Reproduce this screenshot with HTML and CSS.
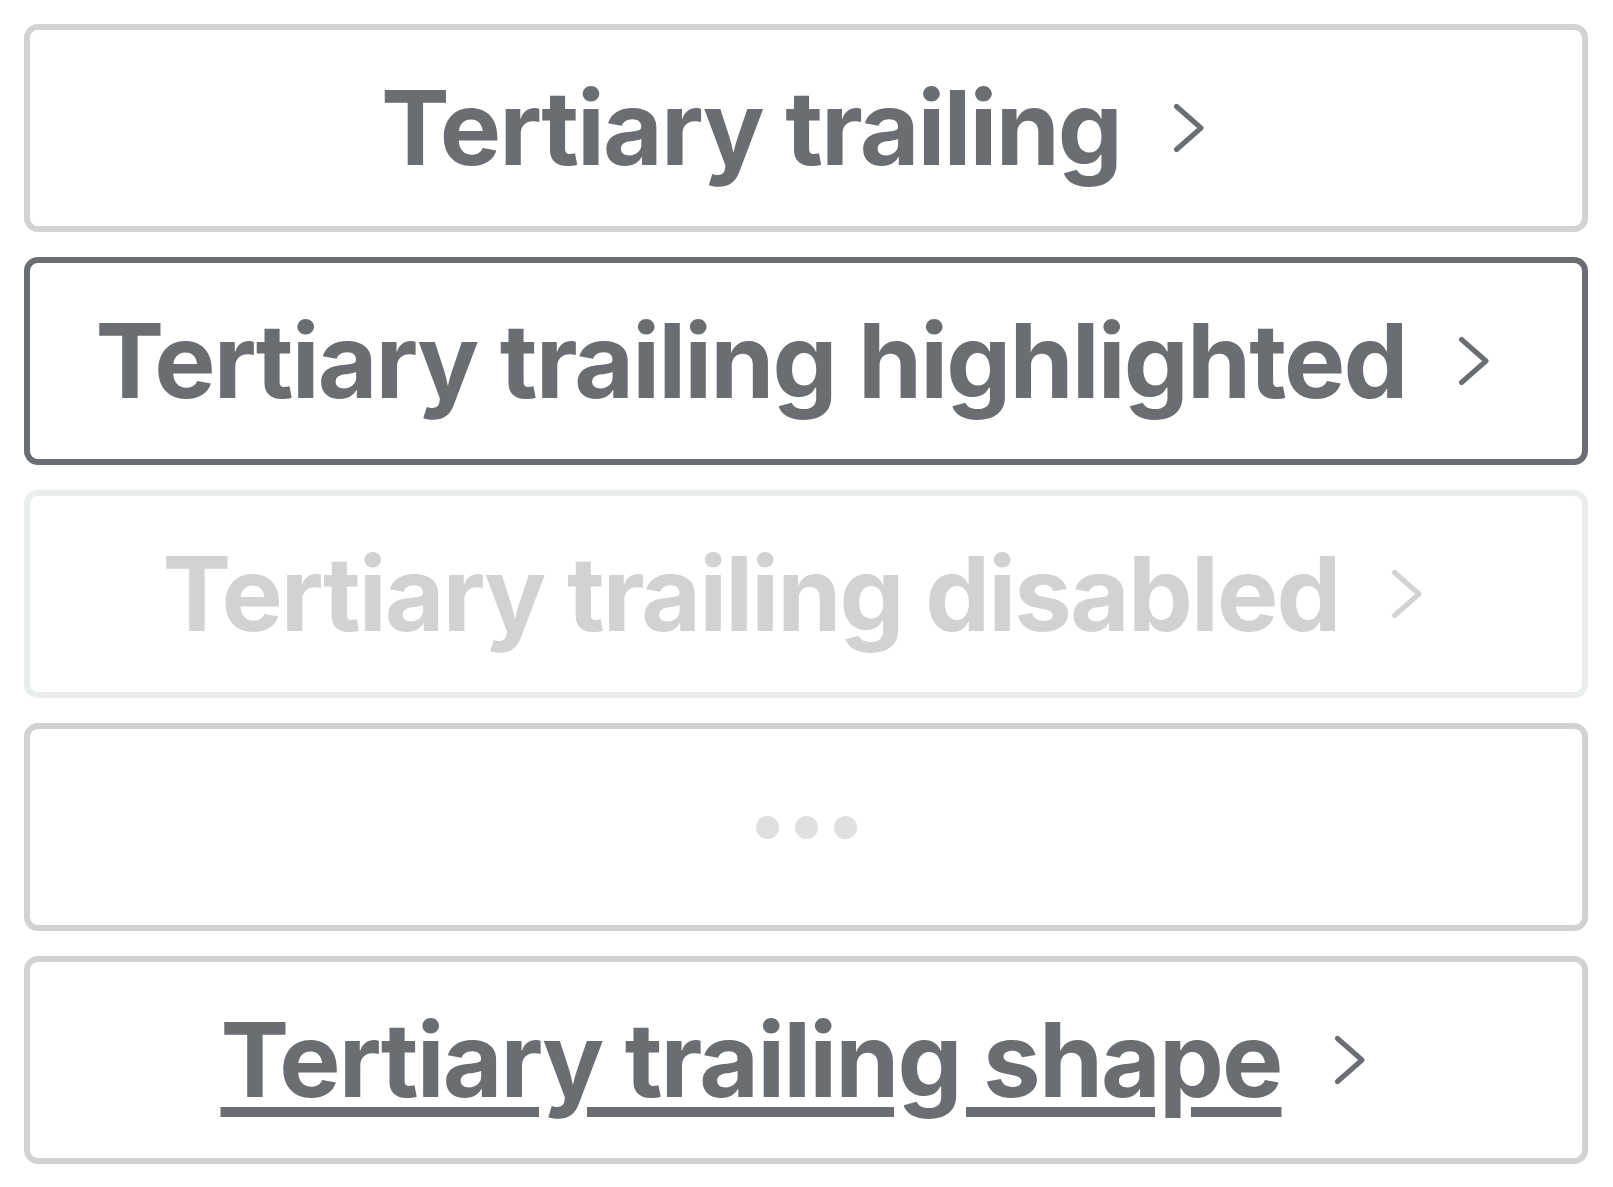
FILE: index.html
```html
<!DOCTYPE html>
<html lang="en">
<head>
<meta charset="utf-8">
<title>Tertiary trailing buttons</title>
<link rel="stylesheet" href="styles.css">
</head>
<body>
<div class="stack">
  <button class="btn">
    <span class="label">Tertiary trailing</span>
    <svg class="chev" viewBox="0 0 32 50" width="32" height="50"><path d="M3.5 3.5 L28 25 L3.5 46.5"/></svg>
  </button>
  <button class="btn btn-highlight">
    <span class="label">Tertiary trailing highlighted</span>
    <svg class="chev" viewBox="0 0 32 50" width="32" height="50"><path d="M3.5 3.5 L28 25 L3.5 46.5"/></svg>
  </button>
  <button class="btn btn-disabled" disabled>
    <span class="label">Tertiary trailing disabled</span>
    <svg class="chev" viewBox="0 0 32 50" width="32" height="50"><path d="M3.5 3.5 L28 25 L3.5 46.5"/></svg>
  </button>
  <button class="btn btn-loading">
    <span class="dots"><span class="dot"></span><span class="dot"></span><span class="dot"></span></span>
  </button>
  <button class="btn btn-shape">
    <span class="label underline">Tertiary trailing shape</span>
    <svg class="chev" viewBox="0 0 32 50" width="32" height="50"><path d="M3.5 3.5 L28 25 L3.5 46.5"/></svg>
  </button>
</div>
</body>
</html>
```
FILE: styles.css
```css
html, body {
  margin: 0;
  padding: 0;
  background: #ffffff;
}
body {
  font-family: Inter, "Noto Sans", sans-serif;
}
.stack {
  display: flex;
  flex-direction: column;
  gap: 25px;
  padding: 24px 25px 23px 24px;
}
.btn {
  box-sizing: border-box;
  height: 208px;
  width: 100%;
  display: flex;
  align-items: center;
  justify-content: center;
  gap: 52px;
  background: #ffffff;
  border: 6px solid #d2d2d2;
  border-radius: 14px;
  padding: 0;
  margin: 0;
  color: #6a6e73;
  font-family: Inter, "Noto Sans", sans-serif;
  cursor: pointer;
}
.label {
  font-size: 103px;
  font-weight: 700;
  line-height: 1;
  letter-spacing: -1.9px;
  position: relative;
  top: -1px;
}
.chev {
  display: block;
  flex: none;
  margin-right: 26px;
}
.chev path {
  fill: none;
  stroke: currentColor;
  stroke-width: 5;
  stroke-linecap: round;
  stroke-linejoin: round;
}
.btn-highlight {
  border-color: #6a6e73;
}
.btn-disabled {
  border-color: #eaeded;
  color: #d2d2d2;
  cursor: default;
}
.btn-loading {
  color: #dfe0e2;
}
.dots {
  display: flex;
  gap: 16px;
}
.dot {
  width: 23px;
  height: 23px;
  border-radius: 50%;
  background: #dfe0e2;
}
.underline {
  text-decoration: underline;
  text-decoration-thickness: 10px;
  text-underline-offset: 10px;
  text-decoration-skip-ink: auto;
}
```
